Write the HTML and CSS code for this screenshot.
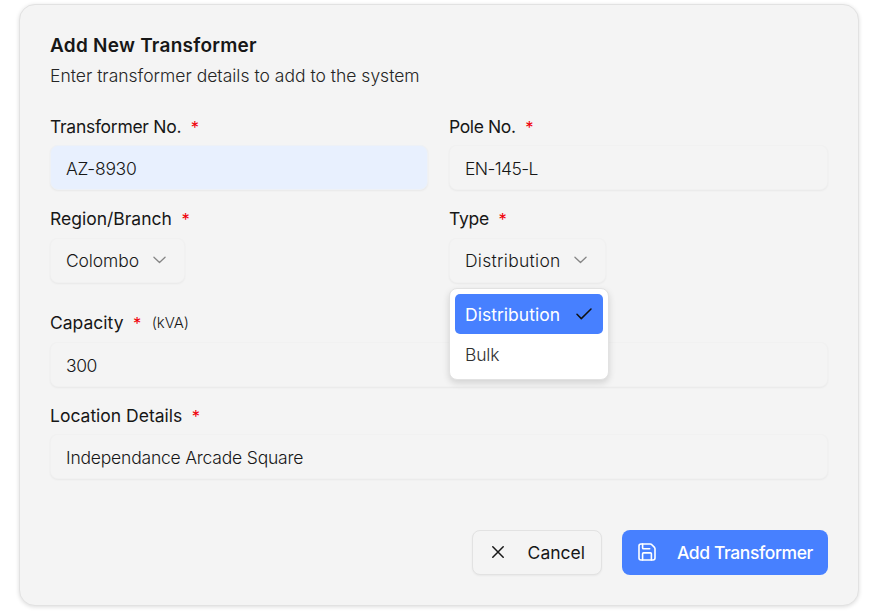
FILE: index.html
```html
<!DOCTYPE html>
<html lang="en">
<head>
<meta charset="utf-8">
<title>Add New Transformer</title>
<link rel="stylesheet" href="styles.css">
</head>
<body>
<form class="card">
  <header class="head">
    <h1><span class="t-title">Add New Transformer</span></h1>
    <p><span class="t-sub">Enter transformer details to add to the system</span></p>
  </header>
  <div class="grid">
    <div class="field">
      <label><span class="t-no">Transformer No.</span><b>*</b></label>
      <div class="input filled"><span class="t-az">AZ-8930</span></div>
    </div>
    <div class="field">
      <label><span class="t-pole">Pole No.</span><b>*</b></label>
      <div class="input"><span class="t-en">EN-145-L</span></div>
    </div>
    <div class="field">
      <label><span class="t-region">Region/Branch</span><b>*</b></label>
      <div class="input select region"><span class="t-col">Colombo</span>
        <svg class="chev" viewBox="0 0 14 8"><path d="M1 1l6 5.7L13 1"/></svg></div>
    </div>
    <div class="field">
      <label><span class="t-type">Type</span><b>*</b></label>
      <div class="input select type"><span class="t-dist">Distribution</span>
        <svg class="chev" viewBox="0 0 14 8"><path d="M1 1l6 5.7L13 1"/></svg>
        <div class="menu">
          <div class="option active"><span class="t-active">Distribution</span>
            <svg class="check" viewBox="0 0 16 12"><path d="M1 6.3l4.3 4.3L15 1"/></svg></div>
          <div class="option"><span class="t-bulk">Bulk</span></div>
        </div>
      </div>
    </div>
    <div class="field wide capacity">
      <label><span class="t-cap">Capacity</span><b>*</b><small><span class="t-kva">(kVA)</span></small></label>
      <div class="input"><span class="t-300">300</span></div>
    </div>
    <div class="field wide">
      <label><span class="t-loc">Location Details</span><b>*</b></label>
      <div class="input"><span class="t-ind">Independance Arcade Square</span></div>
    </div>
  </div>
  <footer class="actions">
    <button type="button" class="btn cancel">
      <svg class="x" viewBox="0 0 12 12"><path d="M.8.8l10.4 10.4M11.2.8L.8 11.2"/></svg><span class="t-cancel">Cancel</span></button>
    <button type="button" class="btn primary">
      <svg class="save" viewBox="0 0 18 18"><path d="M3 1h9.3c.5 0 .9.2 1.3.5l2.900 2.900c.3.4.5.8.5 1.300V15a2 2 0 0 1-2 2H3a2 2 0 0 1-2-2V3a2 2 0 0 1 2-2z"/><path d="M4.600 17v-6.200a.9.9 0 0 1 .9-.9h7a.9.9 0 0 1 .9.9V17M4.600 1v3.900c0 .5.4.9.9.9h6.200"/></svg><span class="t-add">Add Transformer</span></button>
  </footer>
</form>
</body>
</html>
```
FILE: styles.css
```css
* { box-sizing: border-box; }
body {
  margin: 0;
  padding: 4px 27px 7px 19px;
  background: #fff;
  color: #171717;
  font: 300 17.5px/24px Inter, "Liberation Sans", sans-serif;
}
span { white-space: nowrap; }
.card {
  width: 840px;
  height: 602px;
  padding: 28px 30px 30px;
  background: #f4f4f4;
  border: 1px solid #e2e2e2;
  border-radius: 16px;
  box-shadow: 0 1px 4px rgba(0, 0, 0, .14);
}
.head { height: 77px; }
h1 { margin: 0; padding-top: 1px; font-size: 19px; font-weight: 600; line-height: 24px; }
p { margin: 6px 0 0; color: #252525; }
.grid { display: grid; grid-template-columns: 379px 379px; column-gap: 20px; }
.field { height: 92px; }
.field.capacity { margin-top: 12px; height: 93px; }
.capacity .input { margin-top: 2px; }
.wide { grid-column: 1 / -1; }
label { display: flex; align-items: center; height: 34px; font-weight: 370; }
label b { margin-left: 9.5px; color: #f00008; font-size: 16.5px; font-weight: 400; line-height: 24px; }
small { margin-left: 10.5px; font-size: 15px; font-weight: 300; letter-spacing: -.1px; }
.input {
  display: flex;
  align-items: center;
  height: 45px;
  margin-top: 1px;
  padding: 2px 15px 0;
  border: 1px solid rgba(0, 0, 0, .01);
  border-radius: 8px;
  background: #f4f4f4;
  box-shadow: 0 1px 2px rgba(0, 0, 0, .05);
}
.filled { width: 378px; background: #e8f0fe; border-color: #eef1f6; }
.select { position: relative; justify-content: space-between; padding-right: 19px; margin-top: 2px; padding-top: 0; }
.region { width: 135px; }
.type { width: 157px; }
svg { flex: none; fill: none; stroke: currentColor; stroke-linecap: round; stroke-linejoin: round; }
.chev { width: 13px; height: 8px; color: #858585; stroke-width: 1.4; }
.region .chev, .type .chev { margin-top: -2px; margin-right: -.5px; }
.menu {
  position: absolute;
  left: -1px;
  top: 49px;
  width: 160px;
  height: 92px;
  padding: 5px 4px 4px 5px;
  background: #fff;
  border: 1px solid #e2e2e2;
  border-radius: 8px;
  box-shadow: 0 3px 7px rgba(0, 0, 0, .14);
}
.option { display: flex; align-items: center; justify-content: space-between; width: 148px; height: 40px; padding: 2px 11px 0 10px; border-radius: 5px; color: #303030; }
.option.active { background: #4780ff; color: #fff; font-weight: 400; }
.check { width: 16px; height: 12px; margin-top: -2px; color: #111; stroke-width: 1.5; }
.actions { display: flex; justify-content: flex-end; gap: 20px; margin-top: 39px; }
.btn { display: flex; align-items: center; height: 45px; padding: 0; border-radius: 8px; font: inherit; font-weight: 370; color: #171717; }
.cancel { width: 130px; padding: 0 16px 0 19px; justify-content: space-between; background: #f4f4f4; border: 1px solid #e2e2e2; box-shadow: 0 1px 2px rgba(0, 0, 0, .05); }
.primary { width: 206px; padding: 0 15px 0 16px; justify-content: space-between; background: #4780ff; color: #fff; border: 0; font-weight: 450; }
.x { width: 12px; height: 12px; margin-top: -2px; stroke-width: 1.5; }
.save { width: 18px; height: 18px; margin-top: -2px; stroke-width: 1.6; }

/* per-text tracking */
.t-title { letter-spacing: .25px; }
.t-no { letter-spacing: -.28px; }
.t-pole { letter-spacing: -.38px; }
.t-az { letter-spacing: -.3px; }
.t-en { letter-spacing: -.6px; }
.t-col { letter-spacing: -.12px; }
.t-dist { letter-spacing: .28px; }
.t-active { letter-spacing: .03px; }
.t-300 { letter-spacing: -.4px; }
.t-type { letter-spacing: -.25px; }
.t-bulk { letter-spacing: -.2px; }
.t-ind { letter-spacing: -.2px; }
.t-add { letter-spacing: -.39px; }
```
